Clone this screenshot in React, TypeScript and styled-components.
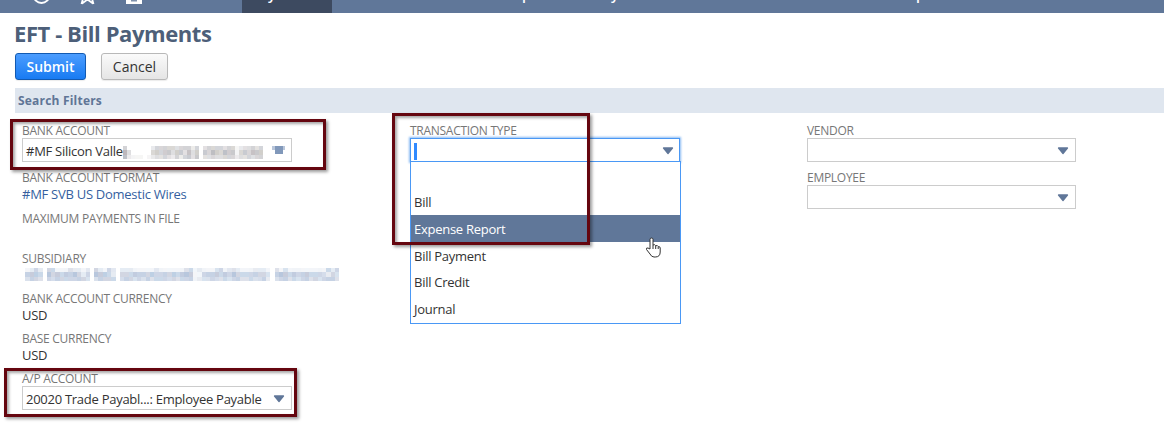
import React from "react";
import styled, { createGlobalStyle, css } from "styled-components";

const Global = createGlobalStyle`
  * { box-sizing: border-box; }
  body { margin: 0; background: #fff; font-family: "Open Sans", sans-serif; overflow: hidden; }
`;

const Page = styled.div`
  position: relative;
  width: 1165px;
  height: 423px;
  overflow: hidden;
`;
const NavBar = styled.nav`
  position: relative;
  display: flex;
  width: 1164px;
  height: 13px;
  padding-left: 242px;
  background: #607799;
  overflow: hidden;
`;
const ActiveTab = styled.div`
  width: 90px;
  height: 13px;
  background: #3d4a60;
`;
const NavText = styled.span<{ $x: number }>`
  position: absolute;
  left: ${(p) => p.$x}px;
  top: -15px;
  font-size: 14px;
  line-height: 20px;
  font-weight: 600;
  color: #fff;
`;
const NavIcons = styled.svg`
  position: absolute;
  left: 0;
  top: 0;
`;
const Title = styled.h1`
  margin: 0;
  padding: 6px 0 0 14px;
  height: 40px;
  font-size: 22px;
  line-height: 28px;
  font-weight: 700;
  letter-spacing: -0.42px;
  color: #4d5f79;
  white-space: nowrap;
`;
const Buttons = styled.div`
  display: flex;
  gap: 15px;
  height: 35px;
  padding-left: 15px;
`;
const Button = styled.button<{ $primary?: boolean }>`
  width: ${(p) => (p.$primary ? 71 : 67)}px;
  height: 27px;
  padding: 0;
  border: 1px solid #b8b8b8;
  border-radius: 3px;
  background: linear-gradient(#fafafa, #e5e5e5);
  box-shadow: 0 1px 1px rgba(0, 0, 0, 0.08);
  color: #333;
  font: 400 14px/24px "Open Sans", sans-serif;
  ${(p) =>
    p.$primary &&
    css`
      border-color: #125ab2;
      background: linear-gradient(#4c9dff, #187bf2);
      color: #fff;
      font-weight: 600;
    `}
`;
const SectionBar = styled.div`
  width: 1149px;
  height: 25px;
  margin-left: 15px;
  padding-left: 3px;
  background: #dfe6ef;
  color: #5f7596;
  font-size: 12px;
  line-height: 25px;
  font-weight: 700;
  letter-spacing: 0.2px;
`;
const Columns = styled.div`
  display: grid;
  grid-template-columns: 388px 397px 280px;
  padding: 10px 0 0 22px;
`;
const Field = styled.div<{ $height: number }>`
  position: relative;
  height: ${(p) => p.$height}px;
`;
const Label = styled.div<{ $drop?: boolean }>`
  height: 15px;
  padding-top: ${(p) => (p.$drop ? 1 : 0)}px;
  font-size: 12px;
  line-height: 16px;
  letter-spacing: -0.28px;
  color: #777;
  white-space: nowrap;
`;
const Value = styled.div<{ $link?: boolean }>`
  font-size: 13px;
  line-height: 19px;
  letter-spacing: -0.27px;
  color: ${(p) => (p.$link ? "#355f9f" : "#333")};
  white-space: nowrap;
`;
const SelectBox = styled.div<{ $focused?: boolean; $narrow?: boolean }>`
  display: flex;
  align-items: center;
  justify-content: space-between;
  width: ${(p) => (p.$narrow ? 269 : 270)}px;
  height: 24px;
  padding: 2px 6px 0 3px;
  border: 1px solid #ccc;
  color: #333;
  font-size: 13px;
  line-height: 20px;
  letter-spacing: -0.27px;
  white-space: nowrap;
  ${(p) =>
    p.$focused &&
    css`
      padding-right: 5px;
      border-color: #4a98f5;
      box-shadow: 0 0 2px 1px #8bbcf3;
    `}
`;
const Caret = styled.span`
  width: 3px;
  height: 17px;
  background: #308aff;
`;
const Menu = styled.ul`
  position: absolute;
  z-index: 1;
  top: 38px;
  left: 0;
  width: 271px;
  height: 163px;
  margin: 0;
  padding: 26px 0 0;
  list-style: none;
  border: 1px solid #4a98f5;
  background: #fff;
`;
const Option = styled.li<{ $active?: boolean }>`
  height: 27px;
  padding-left: 3px;
  font-size: 13px;
  line-height: 28px;
  letter-spacing: -0.27px;
  color: ${(p) => (p.$active ? "#fff" : "#333")};
  background: ${(p) => (p.$active ? "#607799" : "transparent")};
  &:nth-child(n + 4) {
    line-height: 26px;
  }
`;
const Callout = styled.div<{ $x: number; $y: number; $w: number; $h: number }>`
  position: absolute;
  z-index: 2;
  left: ${(p) => p.$x}px;
  top: ${(p) => p.$y}px;
  width: ${(p) => p.$w}px;
  height: ${(p) => p.$h}px;
  border: 3px solid #65060f;
  box-shadow: 2px 2px 3px rgba(0, 0, 0, 0.4), inset 2px 2px 3px rgba(0, 0, 0, 0.35);
`;
const Pointer = styled.svg`
  position: absolute;
  z-index: 3;
  left: 645px;
  top: 237px;
`;
const MosaicSvg = styled.svg<{ $x: number; $y: number }>`
  position: absolute;
  left: ${(p) => p.$x}px;
  top: ${(p) => p.$y}px;
`;

const Arrow = () => (
  <svg width="12" height="8" viewBox="0 0 12 8">
    <path d="M1.5 1h9L6 6.5z" fill="#607799" stroke="#607799" strokeWidth="1.3" strokeLinejoin="round" />
  </svg>
);

// Each digit is the strength of one block of the redaction mosaic.
const accountMosaic = [
  "40000002444443444240344443441233434",
  "73000004545535536350546546551454655",
  "62111012334324245350334334442334344",
];
const subsidiaryMosaic = [
  "01242044111322120421420222111112111111341211134123211122210313111111111424",
  "04554054545454240555420444544454444545551144454545444444430455454454443243",
  "03443043444444430344440344343434443434441233433434433433420344343443434443",
];

const accountTints = ["#77777f", "#8a7f86", "#777d8c", "#8d877c"];
const subsidiaryTints = ["#4e72ab", "#6680b0", "#5d8abb", "#7380a6"];

const Mosaic = ({
  x, y, rows, cell, tints,
}: { x: number; y: number; rows: string[]; cell: number; tints: string[] }) => (
  <MosaicSvg $x={x} $y={y} width={rows[0].length * cell} height={13} shapeRendering="crispEdges">
    {rows.flatMap((row, r) =>
      [...row].map((n, c) => (
        <rect
          key={`${r}-${c}`}
          x={c * cell}
          y={r * 4.3}
          width={cell}
          height={4.3}
          fill={tints[(c * 3 + r * 5 + (c >> 2)) % tints.length]}
          opacity={Number(n) * 0.08}
        />
      ))
    )}
  </MosaicSvg>
);

export default function App() {
  return (
    <>
      <Global />
      <Page>
        <NavBar>
          <ActiveTab />
          <NavIcons width="160" height="13" fill="none" stroke="#fff" strokeWidth="1.8">
            <circle cx="41.5" cy="-5" r="8" />
            <path d="M81.500 4l2-7M82 3.500l5.500-4 5.500 4M93.500 4l-2-7" />
            <path d="M126-2h16v6h-16z" fill="#fff" stroke="none" />
            <path d="M131 .8h6" stroke="#607799" strokeWidth="1.2" />
          </NavIcons>
          <NavText $x={268}>y</NavText>
          <NavText $x={522}>p</NavText>
          <NavText $x={611}>y</NavText>
          <NavText $x={916}>p</NavText>
        </NavBar>
        <Title>EFT - Bill Payments</Title>
        <Buttons>
          <Button $primary>Submit</Button>
          <Button>Cancel</Button>
        </Buttons>
        <SectionBar>Search Filters</SectionBar>
        <Columns>
          <div>
            <Field $height={47}>
              <Label>BANK ACCOUNT</Label>
              <SelectBox>#MF Silicon Valle</SelectBox>
              <Mosaic x={101} y={23} rows={accountMosaic} cell={4} tints={accountTints} />
              <MosaicSvg $x={250} $y={23} width={14} height={10}>
                <path d="M0 0h13v4H0z" fill="#b9c6da" />
                <path d="M3 0h8v8H3z" fill="#8198ba" />
              </MosaicSvg>
            </Field>
            <Field $height={40}>
              <Label>BANK ACCOUNT FORMAT</Label>
              <Value $link>#MF SVB US Domestic Wires</Value>
            </Field>
            <Field $height={40}>
              <Label $drop>MAXIMUM PAYMENTS IN FILE</Label>
            </Field>
            <Field $height={41}>
              <Label $drop>SUBSIDIARY</Label>
              <Mosaic x={-1} y={18} rows={subsidiaryMosaic} cell={4.3} tints={subsidiaryTints} />
            </Field>
            <Field $height={40}>
              <Label>BANK ACCOUNT CURRENCY</Label>
              <Value>USD</Value>
            </Field>
            <Field $height={40}>
              <Label>BASE CURRENCY</Label>
              <Value>USD</Value>
            </Field>
            <Field $height={40}>
              <Label>A/P ACCOUNT</Label>
              <SelectBox>
                20020 Trade Payabl...: Employee Payable
                <Arrow />
              </SelectBox>
            </Field>
          </div>
          <div>
            <Field $height={47}>
              <Label>TRANSACTION TYPE</Label>
              <SelectBox $focused>
                <Caret />
                <Arrow />
              </SelectBox>
              <Menu>
                <Option>Bill</Option>
                <Option $active>Expense Report</Option>
                <Option>Bill Payment</Option>
                <Option>Bill Credit</Option>
                <Option>Journal</Option>
              </Menu>
            </Field>
          </div>
          <div>
            <Field $height={47}>
              <Label>VENDOR</Label>
              <SelectBox $narrow>
                <span />
                <Arrow />
              </SelectBox>
            </Field>
            <Field $height={47}>
              <Label>EMPLOYEE</Label>
              <SelectBox $narrow>
                <span />
                <Arrow />
              </SelectBox>
            </Field>
          </div>
        </Columns>
        <Callout $x={10} $y={119} $w={316} $h={51} />
        <Callout $x={392} $y={113} $w={198} $h={132} />
        <Callout $x={4} $y={368} $w={293} $h={49} />
        <Pointer width="17" height="22" viewBox="0 0 17 22">
          <path
            d="M5 12V2.500a1.500 1.500 0 0 1 3 0V8q2-1 2.700.7 2-.7 2.500.9 2-.3 2 1.400v4q0 5-5 5H9q-2.500 0-4-3l-3.500-4.500q-.5-2 1.500-1.500z"
            fill="#fff"
            stroke="#333"
          />
          <path d="M8 8v4M10.700 9v3M13.200 10v2" stroke="#333" />
        </Pointer>
      </Page>
    </>
  );
}
